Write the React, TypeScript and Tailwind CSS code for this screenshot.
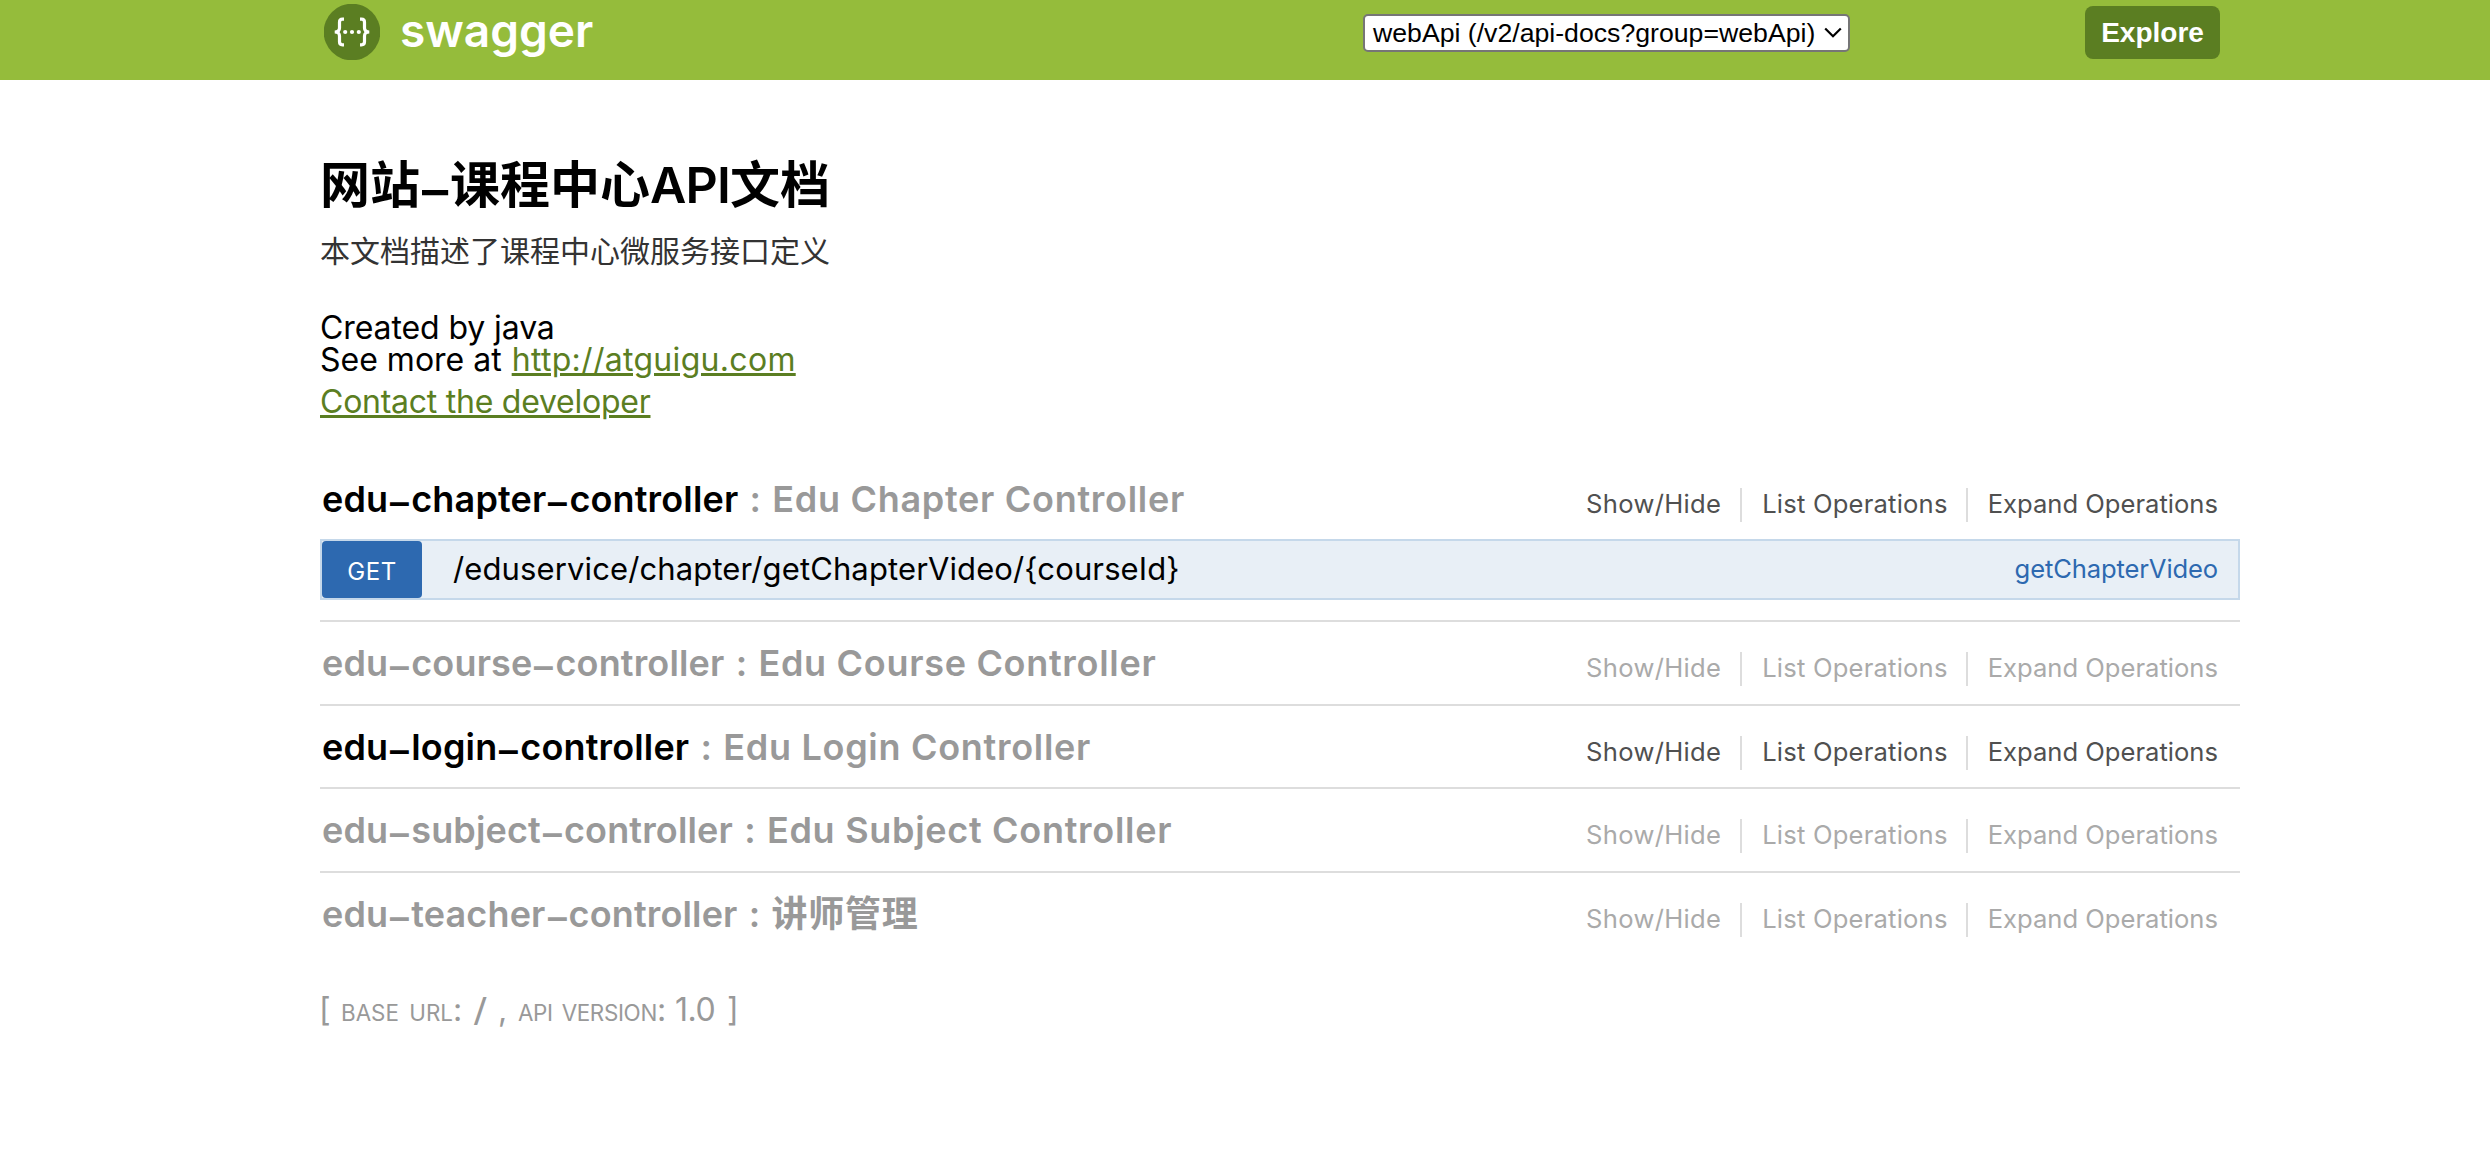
import React, { Fragment } from 'react';

type Controller = {
  name: string;
  title: string;
  active: boolean;
  height: string;
};

const controllers: Controller[] = [
  { name: 'edu-course-controller', title: 'Edu Course Controller', active: false, height: 'h-[84px]' },
  { name: 'edu-login-controller', title: 'Edu Login Controller', active: true, height: 'h-[83px]' },
  { name: 'edu-subject-controller', title: 'Edu Subject Controller', active: false, height: 'h-[84px]' },
  { name: 'edu-teacher-controller', title: '讲师管理', active: false, height: 'h-[82px]' },
];

function Logo() {
  return (
    <svg width="56" height="56" viewBox="0 0 56 56" fill="none">
      <circle cx="28" cy="28" r="28.3" fill="#5b7e22" />
      <g stroke="#fff" strokeWidth="3.2">
        <path d="M20 15.2h-1.500q-3 0-3 3v5.800q0 4-4.800 4q4.800 0 4.800 4v5.800q0 3 3 3H20" />
        <path d="M36 15.2h1.500q3 0 3 3v5.800q0 4 4.800 4q-4.800 0-4.800 4v5.800q0 3-3 3H36" />
      </g>
      <g fill="#fff">
        <circle cx="21.2" cy="28" r="2.1" />
        <circle cx="28" cy="28" r="2.1" />
        <circle cx="34.8" cy="28" r="2.1" />
      </g>
    </svg>
  );
}

function Header() {
  return (
    <header className="h-20 bg-[#95bc3b]">
      <div className="ml-[320px] flex w-[1920px] items-start pl-1">
        <a className="flex w-[1039px] items-start pt-1">
          <Logo />
          <span className="-mt-[2px] ml-[20px] text-[46px] leading-[56px] font-semibold text-white">swagger</span>
        </a>
        <div className="mt-[14px] flex h-[38px] w-[487px] items-center rounded-[5px] border-2 border-[#767676] bg-white pl-[8px] font-['Liberation_Sans',sans-serif] text-[26.670px] leading-[34px] text-black">
          <span className="whitespace-nowrap">webApi (/v2/api-docs?group=webApi)</span>
          <svg className="ml-[9px] shrink-0" width="18" height="12" viewBox="0 0 18 12" fill="none" stroke="#000" strokeWidth="2.2">
            <path d="M1.2 1.5 9 9.3l7.800-7.800" />
          </svg>
        </div>
        <button className="mt-[6px] ml-[235px] h-[53px] w-[135px] rounded-[8px] bg-[#5b7e22] font-['Liberation_Sans',sans-serif] text-[28px] leading-[53px] font-bold text-white">
          Explore
        </button>
      </div>
    </header>
  );
}

function Name({ text }: { text: string }) {
  const parts = text.split('-');
  return (
    <span className="tracking-[0.15px]">
      {parts.map((part, i) => (
        <Fragment key={i}>
          {i > 0 && (
            <span className="inline-block w-[23px] translate-y-[3px] scale-x-[1.6] text-center">-</span>
          )}
          {part}
        </Fragment>
      ))}
    </span>
  );
}

function ControllerHeading({ name, title, active }: { name: string; title: string; active: boolean }) {
  return (
    <div className="flex justify-between">
      <h2 className="pt-[21px] pl-[2px] text-[36px] leading-[40px] font-semibold text-[#999]">
        <span className={active ? 'text-black' : 'text-[#999]'}>
          <Name text={name} />
        </span>
        <span className="inline-block w-[34px] text-center">:</span>
        <span className="tracking-[0.7px]">{title}</span>
      </h2>
      <ul
        className={
          'mt-[30px] flex h-[34px] pr-[22px] text-[25.600px] leading-[32px] ' +
          (active ? 'text-[#505050]' : 'text-[#aaa]')
        }
      >
        <li className="pr-[19px] tracking-[0.3px]">Show/Hide</li>
        <li className="border-l-2 border-[#ddd] pr-[18px] pl-[20px] tracking-[0.2px]">List Operations</li>
        <li className="border-l-2 border-[#ddd] pl-[20px]">Expand Operations</li>
      </ul>
    </div>
  );
}

export default function App() {
  return (
    <div className="min-h-[1160px] bg-white font-['Inter','Noto_Sans_CJK_SC',sans-serif] text-black">
      <Header />
      <main className="ml-[320px] w-[1920px] pt-[75px]">
        <h1 className="text-[50px] leading-[60px] font-semibold">
          网站<span className="inline-block w-[30px] translate-y-[5px] scale-x-[1.6] text-center">-</span>课程中心
          <span className="inline-block w-[80px] tracking-[-0.8px]">API</span>文档
        </h1>
        <p className="mt-[16px] text-[30px] leading-[40px] text-[#333]">本文档描述了课程中心微服务接口定义</p>
        <div className="mt-[41px] text-[32px] leading-[32px]">
          <p className="tracking-[-0.1px]">Created by java</p>
          <p>
            See more at <a className="ml-[1px] tracking-[0.3px] text-[#5b7e22] underline">http://atguigu.com</a>
          </p>
          <p className="mt-[10px]">
            <a className="tracking-[-0.25px] text-[#5b7e22] underline">Contact the developer</a>
          </p>
        </div>

        <ul className="mt-[40px]">
          <li className="h-[164px] border-b-2 border-[#ddd]">
            <ControllerHeading name="edu-chapter-controller" title="Edu Chapter Controller" active />
            <div className="mt-[17px] flex h-[61px] border-2 border-[#c5d8ea] bg-[#e8eff6]">
              <span className="w-[100px] rounded-[4px] bg-[#2d69b0] text-center text-[24px] leading-[61px] tracking-[0.5px] text-white">
                GET
              </span>
              <span className="ml-[31px] flex-1 text-[31px] leading-[55px] tracking-[0.120px]">
                /eduservice/chapter/getChapterVideo/&#123;courseId&#125;
              </span>
              <span className="pr-[20px] text-[25.600px] leading-[55px] tracking-[-0.130px] text-[#2d69b0]">
                getChapterVideo
              </span>
            </div>
          </li>
          {controllers.map((c, i) => (
            <li
              key={c.name}
              className={c.height + (i < controllers.length - 1 ? ' border-b-2 border-[#ddd]' : '')}
            >
              <ControllerHeading name={c.name} title={c.title} active={c.active} />
            </li>
          ))}
        </ul>

        <footer className="mt-[35px] flex text-[32px] leading-[40px] whitespace-pre text-[#999]">
          <span className="w-[21px] -translate-x-px">[</span>
          <span className="w-[132px]">
            <span className="text-[22.400px] uppercase [word-spacing:4px]">base url</span>:
          </span>
          <span className="w-[25px] origin-left scale-x-125">/</span>
          <span className="w-[20px]">,</span>
          <span className="w-[157px]">
            <span className="text-[22.400px] tracking-[-0.350px] uppercase [word-spacing:3px]">api version</span>:
          </span>
          <span className="w-[52px] tracking-[-0.5px]">1.0</span>
          <span>]</span>
        </footer>
      </main>
    </div>
  );
}
